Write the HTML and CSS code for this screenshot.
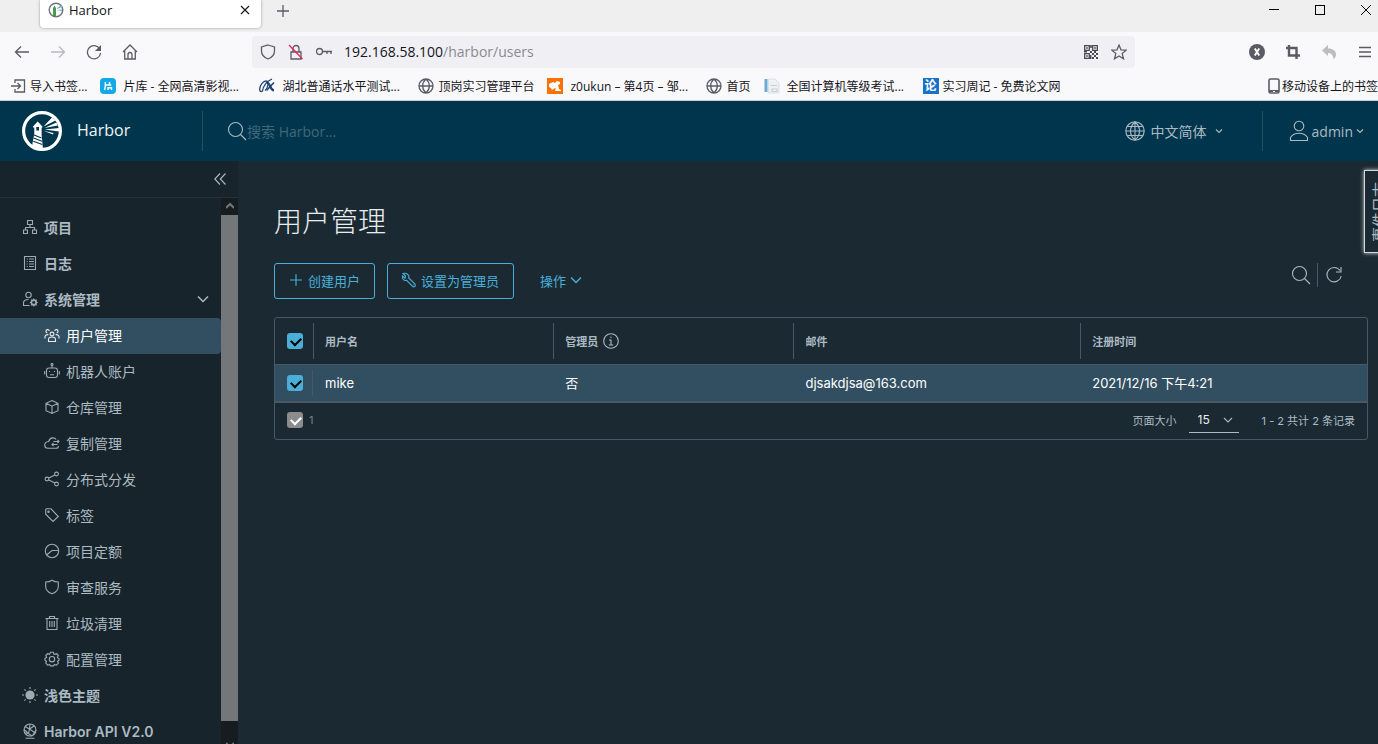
FILE: index.html
```html
<!DOCTYPE html>
<html lang="zh-CN">
<head>
    <meta charset="UTF-8">
    <meta name="viewport" content="width=device-width, initial-scale=1.0">
    <title>Harbor</title>
    <link rel="stylesheet" href="styles.css">
</head>
<body>
    <!-- 浏览器外框 -->
    <div class="browser">
        <div class="tabs">
            <div class="tab">
                <svg class="i16" viewBox="0 0 16 16"><circle cx="8" cy="8" r="6.800" fill="#fff" stroke="#6b7378" stroke-width="1.400"/><path d="M5 14V6l1.500-2.500L8 6v8z" fill="#4f9a4a"/><path d="M9 6l5-3v2L9 7zM9 8l5-.5v1.500z" fill="#6da7d2"/></svg>
                <span class="tab-title">Harbor</span>
                <button class="plain" aria-label="关闭标签页"><svg class="i16" viewBox="0 0 16 16"><path d="M4 4l8 8M12 4l-8 8" stroke="#15141a" stroke-width="1.100"/></svg></button>
            </div>
            <button class="plain new-tab" aria-label="新标签页"><svg class="i16" viewBox="0 0 16 16"><path d="M8 2v12M2 8h12" stroke="#5b5b66" stroke-width="1.300"/></svg></button>
            <div class="win">
                <button class="plain" aria-label="最小化"><svg class="i12" viewBox="0 0 12 12"><path d="M1 5.500h10" stroke="#000"/></svg></button>
                <button class="plain" aria-label="最大化"><svg class="i12" viewBox="0 0 12 12"><rect x="1.500" y="1.500" width="9" height="9" fill="none" stroke="#000"/></svg></button>
                <button class="plain" aria-label="关闭"><svg class="i12" viewBox="0 0 12 12"><path d="M1 1l10 10M11 1L1 11" stroke="#000"/></svg></button>
            </div>
        </div>

        <div class="toolbar">
            <div class="nav-btns">
                <button class="plain" aria-label="后退"><svg class="i16" viewBox="0 0 16 16"><path d="M15 8H1.500M7 2.500L1.500 8 7 13.500" class="ff"/></svg></button>
                <button class="plain off" aria-label="前进"><svg class="i16" viewBox="0 0 16 16"><path d="M1 8h13.500M9 2.500L14.500 8 9 13.500" class="ff"/></svg></button>
                <button class="plain" aria-label="刷新"><svg class="i16" viewBox="0 0 16 16"><path d="M13.800 5A6.600 6.600 0 1 0 14.600 9" class="ff"/><path d="M15 1v6H9z" fill="#5b5b66"/></svg></button>
                <button class="plain" aria-label="主页"><svg class="i16" viewBox="0 0 16 16"><path d="M1 8l7-7 7 7M2.700 6.500V15h10.600V6.500M6 15v-4.500a2 2 0 0 1 4 0V15" class="ff"/></svg></button>
            </div>
            <div class="urlbar">
                <svg class="i16" viewBox="0 0 16 16"><path d="M8 1l6.500 2v4c0 4-2.500 6.500-6.500 8C4 13.500 1.500 11 1.500 7V3z" class="ff"/></svg>
                <svg class="i16" viewBox="0 0 16 16"><path d="M3 8h10v7H3zM5 8V4.500a3 3 0 0 1 6 0V8" class="ff"/><path d="M1 1l13.500 14" stroke="#e22850" stroke-width="1.300"/></svg>
                <svg class="i16" viewBox="0 0 16 16"><circle cx="3.500" cy="7.500" r="3" class="ff"/><path d="M6.500 7.500H16M11 7.500V10M15 7.500V10" class="ff"/></svg>
                <div class="url" role="textbox" aria-label="地址栏" contenteditable="true" spellcheck="false">192.168.58.100<span>/harbor/users</span></div>
                <button class="plain" aria-label="二维码"><svg class="i16" viewBox="0 0 16 16"><path d="M1.700 1.700h4.600v4.600H1.700zM9.700 1.700h4.600v4.600H9.700zM1.700 9.700h4.600v4.600H1.700z" fill="none" stroke="#4a4a55" stroke-width="1.300"/><path d="M3.200 3.200h1.600v1.600H3.200zM11.200 3.200h1.600v1.600h-1.600zM3.200 11.200h1.600v1.600H3.200zM7.200 1h1.600v3H7.200zM7 7h2v2H7zM1 7h3v1.500H1zM9 9h2v2H9zM11 7h2v2h-2zM13 9h2v2h-2zM11 11h2v2h-2zM9 13h2v2H9zM13 13h2v2h-2zM7 11h1.500v4H7z" fill="#4a4a55"/></svg></button>
                <button class="plain" aria-label="收藏"><svg class="i16" viewBox="0 0 16 16"><path d="M8 1l2 4.800 5.200.4-4 3.400 1.300 5.200L8 12l-4.500 2.800 1.300-5.200-4-3.400 5.200-.4z" class="ff"/></svg></button>
            </div>
            <div class="ext">
                <button class="plain" aria-label="扩展"><svg class="i16" viewBox="0 0 16 16"><circle cx="8" cy="8" r="8" fill="#5b5b66"/><path d="M5.800 4.500l4.400 7M10.200 4.500l-4.400 7" stroke="#fff" stroke-width="1.900"/></svg></button>
                <button class="plain" aria-label="截图"><svg class="i16" viewBox="0 0 16 16"><path d="M4 1v10.500h11M1 4h10.500v11" fill="none" stroke="#5b5b66" stroke-width="2.400"/></svg></button>
                <button class="plain" aria-label="撤销"><svg class="i16" viewBox="0 0 16 16"><path d="M1 6.500L7 1v3.500c5 0 8 2.500 8 6 0 2-1 3.500-2.500 4.500-.5-4-2-6-5.500-6V12z" fill="#bbbbc0"/></svg></button>
                <button class="plain" aria-label="菜单"><svg class="i16" viewBox="0 0 16 16"><path d="M2 3.500h12M2 8h12M2 12.500h12" class="ff"/></svg></button>
            </div>
        </div>

        <nav class="bookmarks">
            <a href="#"><svg class="i16" viewBox="0 0 16 16"><path d="M5 5V2h9.500v12H5v-3M1 8h9M7.500 5l3 3-3 3" class="ff"/></svg>导入书签...</a>
            <a href="#" class="wide"><svg class="i16" viewBox="0 0 16 16"><rect width="16" height="16" rx="4" fill="#12a9e6"/><path d="M5.300 4v4.500L4.500 12M5.300 7h6M9.500 4v3M8 12V9.700h3.500V12" fill="none" stroke="#fff" stroke-width="1.400"/></svg>片库 - 全网高清影视...</a>
            <a href="#" class="wide"><svg class="i16" viewBox="0 0 16 16"><path d="M13 1C8 3 4 8 3.500 13c-2 1.500-3 0-2.800-2C1 6.500 4.500 3 7 3c3 0 2.500 7-1 9.500" fill="none" stroke="#1e4274" stroke-width="1.300"/><path d="M8 4.500c3 0 3 7.500 7 8" fill="none" stroke="#1e4274" stroke-width="2.200"/><path d="M15 4.500L7.500 12.500" stroke="#1e4274" stroke-width="1.500"/></svg>湖北普通话水平测试...</a>
            <a href="#"><svg class="i16" viewBox="0 0 16 16"><path d="M8 1a7 7 0 1 0 0 14A7 7 0 0 0 8 1zM8 1c-4.500 4-4.500 10 0 14M8 1c4.500 4 4.500 10 0 14M1 8h14" class="ff"/></svg>顶岗实习管理平台</a>
            <a href="#" class="wide"><svg class="i16" viewBox="0 0 16 16"><path d="M0 0h16v16H0z" fill="#fb7108"/><path d="M2 6l4-2 2 1 2-2 3 1v2l-2 1 1 4 2 1v1H8v-1l1-1-1-1-3 2-1-2-2-1z" fill="#fff"/></svg>z0ukun – 第4页 – 邹...</a>
            <a href="#"><svg class="i16" viewBox="0 0 16 16"><path d="M8 1a7 7 0 1 0 0 14A7 7 0 0 0 8 1zM8 1c-4.500 4-4.500 10 0 14M8 1c4.500 4 4.500 10 0 14M1 8h14" class="ff"/></svg>首页</a>
            <a href="#" class="wide"><svg class="i16" viewBox="0 0 16 16"><path d="M.5 1h3v13h-3z" fill="#6aaad8"/><path d="M4.500 1H11l4 4v10H4.500z" fill="#eef1f3" stroke="#dbdfe3"/><path d="M6.500 7.500H13M8 11h5v2.500H8z" fill="none" stroke="#c9d0d5" stroke-width="1.200"/></svg>全国计算机等级考试...</a>
            <a href="#"><b class="lun">论</b>实习周记 - 免费论文网</a>
            <a href="#" class="mobile"><svg class="phone" viewBox="0 0 12 16"><rect x="1" y="1" width="10" height="14" rx="1.500" fill="none" stroke="#5b5b66" stroke-width="1.600"/><path d="M1 13h10" stroke="#5b5b66" stroke-width="2"/><path d="M5 13.500h2" stroke="#fff"/></svg>移动设备上的书签</a>
        </nav>
    </div>

    <!-- 顶部导航 -->
    <header class="header">
        <a href="#" class="brand">
            <svg class="logo" viewBox="0 0 40 40">
                <circle cx="20" cy="20" r="18.400" fill="none" stroke="#fff" stroke-width="3.200"/>
                <path d="M11 15.500l4.700-5 4.700 5v1h-.8V23h-7.300v-6.500H11z" fill="#fff"/>
                <path d="M14.300 16h2.700v3.500h-2.700z" fill="#00364d"/>
                <path d="M12.300 22.500h7.200l1.500 16c-4 .5-8-.8-11-3.300z" fill="#fff"/>
                <path d="M12 24l7.500 3M11.500 27l8.500 3.200M11.300 30.200l9 3.200" stroke="#00364d" stroke-width="1.100"/>
                <path d="M21.500 15.500L30 6.500l3.500 3zM22.500 17l11.800-5.500 1.500 3zM22.500 18.500l14.500-1.500v3.500zM21.500 19.800l10 2.200-.5 1.500z" fill="#fff"/>
            </svg>
            <span>Harbor</span>
        </a>
        <label class="search">
            <svg class="i20" viewBox="0 0 20 20"><circle cx="8.500" cy="8.500" r="7" class="ln"/><path d="M13.500 13.500l5.500 5.500" class="ln"/></svg>
            <input type="text" aria-label="搜索 Harbor" placeholder="搜索 Harbor...">
        </label>
        <button class="plain lang">
            <svg class="i20" viewBox="0 0 20 20"><circle cx="10" cy="10" r="9.200" class="ln"/><path d="M10 1C4 6 4 14 10 19M10 1c6 5 6 13 0 18M10 1v18M1 10h18M2.500 5.500h15M2.500 14.500h15" class="ln"/></svg>
            中文简体
            <svg class="i8" viewBox="0 0 8 8"><path d="M1 2.500l3 3 3-3" class="ln"/></svg>
        </button>
        <button class="plain user">
            <svg class="person" viewBox="0 0 20 22"><circle cx="10" cy="6" r="4.800" class="ln"/><path d="M1.500 20.500v-3c2-3 5-4.200 8.500-4.200s6.500 1.200 8.500 4.200v3z" class="ln"/></svg>
            admin
            <svg class="i8" viewBox="0 0 8 8"><path d="M1 2.500l3 3 3-3" class="ln"/></svg>
        </button>
    </header>

    <div class="wrap">
        <!-- 侧边栏 -->
        <aside class="side">
            <button class="plain fold" aria-label="收起"><svg class="i12" viewBox="0 0 12 12"><path d="M6 .5L.8 6 6 11.500M11.500.5L6.300 6l5.200 5.500" class="ln"/></svg></button>
            <div class="side-body">
                <nav class="menu">
                    <a href="#" class="top"><svg class="i16" viewBox="0 0 16 16"><path d="M5.500 1.500h5v4h-5zM1.500 11h4v3.500h-4zM10.500 11h4v3.500h-4zM8 5.500v2.800M3.500 11V8.500h9V11" class="ln"/></svg>项目</a>
                    <a href="#" class="top"><svg class="i16" viewBox="0 0 16 16"><path d="M2.500 1.500h11v13h-11zM4.700 4h1M7 4h5M4.700 6.500h1M7 6.500h5M4.700 9h1M7 9h5M4.700 11.500h1M7 11.500h5" class="ln"/></svg>日志</a>
                    <a href="#" class="top"><svg class="i16" viewBox="0 0 16 16"><circle cx="6.500" cy="4" r="2.700" class="ln"/><path d="M7.500 14.500H1.500V12c0-2 2-3.500 5-3.500" class="ln"/><circle cx="11.800" cy="11.500" r="2.300" fill="none" stroke="currentColor" stroke-width="1.800"/><path d="M11.800 7.500v8M7.800 11.500h1.500M14.300 11.500h1.500M9 8.700l1 1M13.600 13.300l1 1M14.600 8.700l-1 1M10 13.300l-1 1" class="ln"/><circle cx="11.800" cy="11.500" r="1.300" fill="#17242b"/></svg>系统管理<svg class="i12 caret" viewBox="0 0 12 12"><path d="M1 3.500l5 5 5-5" fill="none" stroke="currentColor" stroke-width="1.500"/></svg></a>
                    <a href="#" class="sub on"><svg class="i16" viewBox="0 0 16 16"><circle cx="8" cy="7" r="1.900" class="ln"/><path d="M4.500 14.500v-2c0-1.500 1.300-2.500 3.500-2.500s3.500 1 3.500 2.500v2zM5.300 4a1.700 1.700 0 1 0-2 2M10.700 4a1.700 1.700 0 1 1 2 2M1 11.500V9.200c.5-1 2-1.700 3.500-1.500M15 11.500V9.200c-.5-1-2-1.700-3.500-1.500" class="ln"/></svg>用户管理</a>
                    <a href="#" class="sub"><svg class="i16" viewBox="0 0 16 16"><rect x="2.500" y="5" width="11" height="9.500" rx="2.500" class="ln"/><path d="M8 5V2.500M.7 8v3.500M15.300 8v3.500M5.500 8v1M10.500 8v1M6 11.700h4" class="ln"/><circle cx="8" cy="1.500" r="1" class="ln"/></svg>机器人账户</a>
                    <a href="#" class="sub"><svg class="i16" viewBox="0 0 16 16"><path d="M8 1.500l6 2.800v7.400l-6 2.800-6-2.800V4.300zM2 4.300l6 2.900 6-2.900M8 7.200v7.300" class="ln"/></svg>仓库管理</a>
                    <a href="#" class="sub"><svg class="i16" viewBox="0 0 16 16"><path d="M12 4.500C11 2.500 6 1.500 4.700 6.500 2 6.800.7 8.500.7 10.300c0 2 1.500 3 3 3H12c1.500 0 2.500-1 2.500-2.300M9.500 6.500H15M13.500 5l1.500 1.500L13.500 8M13.500 9.500H8M9.500 8L8 9.500 9.500 11" class="ln"/></svg>复制管理</a>
                    <a href="#" class="sub"><svg class="i16" viewBox="0 0 16 16"><circle cx="3" cy="8" r="1.900" class="ln"/><circle cx="12.500" cy="3" r="1.900" class="ln"/><circle cx="12.500" cy="13" r="1.900" class="ln"/><path d="M4.800 7l6-3.100M4.800 9l6 3.100" class="ln"/></svg>分布式分发</a>
                    <a href="#" class="sub"><svg class="i16" viewBox="0 0 16 16"><path d="M1.700 2.500v4.700l7.300 7.300 5.300-5-7.300-7.700H2.500z" class="ln"/><circle cx="4.500" cy="4.700" r=".7" class="ln"/></svg>标签</a>
                    <a href="#" class="sub"><svg class="i16" viewBox="0 0 16 16"><circle cx="8" cy="8" r="6.700" class="ln"/><path d="M2.500 12L8 7.500h6.500" class="ln"/></svg>项目定额</a>
                    <a href="#" class="sub"><svg class="i16" viewBox="0 0 16 16"><path d="M8 1.200c2 1.300 4 1.800 6.300 1.800v4.500c0 3.500-2.300 5.800-6.300 7.300-4-1.500-6.300-3.800-6.300-7.300V3C4 3 6 2.500 8 1.200z" class="ln"/></svg>审查服务</a>
                    <a href="#" class="sub"><svg class="i16" viewBox="0 0 16 16"><path d="M1.500 3.500h13M5.500 3.500v-2h5v2M3 3.500v11h10v-11M5.700 6v6M8 6v6M10.300 6v6" class="ln"/></svg>垃圾清理</a>
                    <a href="#" class="sub"><svg class="i16" viewBox="0 0 16 16"><path d="M6.600 1.300h2.800l.4 1.800 1 .4 1.600-1 2 2-1 1.600.4 1 1.200.4v1.700l-1.400 1 .8 2-2 2-2-.8-.8 1.500H6.500l-.8-1.500-2 .8-2-2 .8-2L1 9.400V7.200l1.700-.7-.9-2 2-2 1.700 1z" class="ln" stroke-linejoin="round"/><circle cx="8" cy="8.200" r="2.700" class="ln"/></svg>配置管理</a>
                    <a href="#" class="top"><svg class="i16" viewBox="0 0 16 16"><circle cx="8" cy="8" r="4.600" fill="currentColor"/><path d="M8 0v2M8 14v2M0 8h2M14 8h2M2.400 2.400l1.300 1.300M12.300 12.300l1.300 1.300M13.600 2.400l-1.300 1.300M3.700 12.300l-1.300 1.300" class="ln"/></svg>浅色主题</a>
                    <a href="#" class="top"><svg class="i16" viewBox="0 0 16 16"><circle cx="8" cy="7" r="6" class="ln"/><path d="M3 3.500l4.500 2.500L12 3M7.500 6l-1 4.500L3 10M6.500 10.500L10 13M7.500 6l5 3.500L14 7M12.500 9.500L11 12M2 6.500l4.500 4M8 1l-.5 5M3.500 15.300h9" class="ln"/></svg>Harbor API V2.0</a>
                </nav>
                <div class="bar">
                    <svg class="i8 up" viewBox="0 0 8 8"><path d="M0 6l4-4 4 4" fill="none" stroke="#737679" stroke-width="2"/></svg>
                    <div class="thumb"></div>
                    <svg class="i8 down" viewBox="0 0 8 8"><path d="M0 2l4 4 4-4" fill="none" stroke="#737679" stroke-width="2"/></svg>
                </div>
            </div>
        </aside>

        <!-- 用户管理 -->
        <main class="main">
            <h1>用户管理</h1>
            <div class="actions">
                <button class="btn"><svg class="i16" viewBox="0 0 16 16"><path d="M8 2v12M2 8h12" class="ln"/></svg>创建用户</button>
                <button class="btn"><svg class="i16" viewBox="0 0 16 16"><path d="M2 1.500l2.500 2.500L4 6.200 1.500 4c-.8 3 1.700 5 4.200 4.300l6 6.200c2 1 3.300-.8 2.300-2.300L7.800 6C8.500 3 6 .5 2 1.500z" class="ln"/><path d="M12.500 12.500l.5.5" class="ln"/></svg>设置为管理员</button>
                <button class="plain more">操作<svg class="i12" viewBox="0 0 12 12"><path d="M1 3.500l5 5 5-5" fill="none" stroke="currentColor" stroke-width="1.400"/></svg></button>
                <div class="tools">
                    <button class="plain" aria-label="搜索"><svg class="i20" viewBox="0 0 20 20"><circle cx="8.500" cy="8.500" r="7" class="ln"/><path d="M13.500 13.500l5.500 5.500" class="ln"/></svg></button>
                    <button class="plain" aria-label="刷新"><svg class="i20" viewBox="0 0 20 20"><path d="M16 5.500a7.200 7.200 0 1 0 1.200 5.500M17 2v5h-5" class="ln"/></svg></button>
                </div>
            </div>

            <div class="grid">
                <table>
                    <thead>
                        <tr>
                            <th class="pick"><input type="checkbox" class="check" aria-label="全选" checked></th>
                            <th class="c1"><div>用户名</div></th>
                            <th class="c1"><div>管理员<svg class="i16" viewBox="0 0 16 16"><circle cx="8" cy="8" r="7.300" class="ln"/><path d="M6 7h2v5M5.800 12h4.400M7.200 4.300h1.400" class="ln"/></svg></div></th>
                            <th><div>邮件</div></th>
                            <th><div>注册时间</div></th>
                        </tr>
                    </thead>
                    <tbody>
                        <tr>
                            <td class="pick"><div><input type="checkbox" class="check" aria-label="选择 mike" checked></div></td>
                            <td>mike</td>
                            <td>否</td>
                            <td>djsakdjsa@163.com</td>
                            <td>2021/12/16 下午4:21</td>
                        </tr>
                    </tbody>
                </table>
                <div class="foot">
                    <label class="picked"><input type="checkbox" class="check" checked disabled>1</label>
                    <label for="size">页面大小</label>
                    <div class="size">
                        <select id="size"><option>15</option><option>25</option><option>50</option></select>
                        <svg class="i12" viewBox="0 0 12 12"><path d="M2 4l4 4 4-4" class="ln"/></svg>
                    </div>
                    <span>1 - 2 共计 2 条记录</span>
                </div>
            </div>
        </main>
        <button class="event-log">事件日志</button>
    </div>
</body>
</html>
```
FILE: styles.css
```css
:root{
    --text: #acbac3;
    --blue: #49afd9;
    --line: #495865;
    --dark: #1b2a32;
}
*{
    box-sizing: border-box;
}
body{
    margin: 0;
    height: 100vh;
    display: flex;
    flex-direction: column;
    overflow: hidden;
    background: var(--dark);
    color: var(--text);
    font-family: Inter, "Noto Sans CJK SC", sans-serif;
    font-size: 14px;
}
a{
    color: inherit;
    text-decoration: none;
}
svg{
    display: block;
    flex: none;
}
button,input,select{
    font-family: inherit;
    color: inherit;
}
.plain{
    display: flex;
    align-items: center;
    padding: 0;
    border: 0;
    background: none;
}

/* 图标 */
.i8{ width: 8px; height: 8px; }
.i12{ width: 12px; height: 12px; }
.i16{ width: 16px; height: 16px; }
.i20{ width: 20px; height: 20px; }
.ln{
    fill: none;
    stroke: currentColor;
    stroke-width: 1.1;
}
.ff{
    fill: none;
    stroke: #5b5b66;
    stroke-width: 1.3;
}
.off{ opacity: .4; }

/* 浏览器 */
.browser{
    flex: none;
    background: #f9f9fb;
    border-bottom: 1px solid #ccccd0;
    color: #15141a;
    font-family: "Open Sans", "Noto Sans CJK SC", sans-serif;
    font-size: 12px;
}
.tabs{
    display: flex;
    height: 32px;
    padding-left: 40px;
    background: #efefef;
}
.tab{
    display: flex;
    align-items: center;
    gap: 5px;
    width: 221px;
    height: 28px;
    padding: 0 8px 8px;
    border-radius: 0 0 4px 4px;
    background: #fff;
    box-shadow: 0 0 3px #999;
}
.tab-title{
    flex: 1;
    font-size: 13px;
}
.new-tab{
    height: 22px;
    margin-left: 14px;
}
.win{
    display: flex;
    gap: 34px;
    height: 20px;
    margin-left: auto;
    padding-right: 6px;
}
.toolbar{
    display: flex;
    align-items: center;
    height: 40px;
    padding-right: 5px;
}
.nav-btns{
    display: flex;
    gap: 20px;
    width: 252px;
    padding-left: 14px;
}
.urlbar{
    flex: 1;
    display: flex;
    align-items: center;
    gap: 12px;
    height: 32px;
    padding: 0 8px;
    border-radius: 4px;
    background: #f0f0f4;
}
.url{
    flex: 1;
    padding-bottom: 2px;
    font-size: 14px;
    outline: 0;
}
.url span{
    color: #8a8a90;
}
.ext{
    display: flex;
    gap: 20px;
    margin-left: 114px;
}
.bookmarks{
    display: flex;
    gap: 13px;
    height: 28px;
    padding-left: 10px;
    white-space: nowrap;
}
.bookmarks a{
    display: flex;
    align-items: center;
    gap: 4px;
}
.bookmarks .wide{
    gap: 7px;
    width: 146px;
}
.bookmarks .mobile{
    gap: 2px;
    margin-left: auto;
}
.phone{
    width: 12px;
    height: 16px;
}
.lun{
    width: 16px;
    height: 16px;
    line-height: 16px;
    text-align: center;
    background: #1673c8;
    color: #fff;
}

/* 顶部导航 */
.header{
    flex: none;
    display: flex;
    align-items: center;
    height: 60px;
    background: #00364d;
}
.brand{
    display: flex;
    align-items: center;
    gap: 15px;
    width: 203px;
    height: 40px;
    padding-left: 22px;
    border-right: 1px solid #234f63;
    color: #f2f5f7;
    font-family: "Open Sans", sans-serif;
    font-size: 16px;
}
.brand span{
    padding-bottom: 2px;
}
.logo{
    width: 40px;
    height: 40px;
}
.search{
    flex: 1;
    display: flex;
    align-items: center;
    padding-left: 24px;
}
.search input{
    width: 200px;
    padding: 0;
    border: 0;
    outline: 0;
    background: none;
    font-family: "Open Sans", "Noto Sans CJK SC", sans-serif;
    font-size: 14px;
}
.search input::placeholder{
    color: #42677a;
}
.lang,.user{
    height: 40px;
    font-size: 14px;
}
.lang{
    gap: 6px;
    padding-right: 39px;
    border-right: 1px solid #234f63;
}
.lang .i8{
    margin-left: 2px;
}
.user{
    gap: 3px;
    padding: 0 14px 0 26px;
    font-family: "Open Sans", sans-serif;
}
.person{
    width: 20px;
    height: 22px;
}

.wrap{
    flex: 1;
    display: flex;
    min-height: 0;
    position: relative;
    overflow: hidden;
}

/* 侧边栏 */
.side{
    flex: none;
    display: flex;
    flex-direction: column;
    width: 238px;
    background: #17242b;
}
.fold{
    flex: none;
    justify-content: flex-end;
    height: 37px;
    padding-right: 12px;
    border-bottom: 1px solid #22323b;
}
.side-body{
    flex: 1;
    display: flex;
    min-height: 0;
}
.menu{
    flex: 1;
    padding-top: 12px;
    overflow: hidden;
}
.menu a{
    display: flex;
    align-items: center;
    gap: 6px;
    height: 36px;
    padding: 0 12px 2px 0;
}
.menu .top{
    padding-left: 22px;
    font-weight: 600;
}
.menu .sub{
    padding-left: 44px;
}
.menu .on{
    border-radius: 0 4px 4px 0;
    background: #324f62;
    color: #fff;
}
.menu .i16{
    opacity: .9;
}
.caret{
    margin-left: auto;
}
.bar{
    display: flex;
    flex-direction: column;
    align-items: center;
    width: 17px;
    background: #171c21;
    overflow: hidden;
}
.up{
    margin: 4px 0 5px;
}
.thumb{
    flex: 1;
    width: 100%;
    background: #73777a;
}
.down{
    margin-top: 20px;
    margin-bottom: -5px;
}

/* 内容区 */
.main{
    flex: 1;
    min-width: 0;
    padding: 41px 10px 0 36px;
}
h1{
    margin: 0;
    color: #eaedf0;
    font-size: 28px;
    line-height: 40px;
    font-weight: 300;
}
.actions{
    display: flex;
    align-items: center;
    gap: 12px;
    height: 36px;
    margin: 21px 0 18px;
}
.btn{
    display: flex;
    align-items: center;
    gap: 4px;
    height: 36px;
    padding: 0 14px 2px 13px;
    border: 1px solid var(--blue);
    border-radius: 3px;
    background: none;
    color: var(--blue);
    font-size: 13px;
}
.more{
    gap: 4px;
    margin-left: 14px;
    padding-bottom: 2px;
    color: var(--blue);
    font-size: 13px;
}
.tools{
    display: flex;
    height: 24px;
    margin-left: auto;
    padding: 0 24px 0 0;
    align-self: flex-start;
}
.tools button:first-child{
    padding-right: 6px;
    border-right: 1px solid var(--line);
}
.tools button:last-child{
    padding-left: 6px;
}
.grid{
    border: 1px solid var(--line);
    border-radius: 3px;
}
table{
    width: 100%;
    table-layout: fixed;
    border-collapse: collapse;
}
th,td{
    padding: 0;
    text-align: left;
}
th{
    height: 46px;
    font-size: 11px;
    font-weight: 600;
}
.c1{
    width: 22%;
}
th div{
    display: flex;
    align-items: center;
    gap: 5px;
    height: 36px;
    padding-left: 11px;
    border-left: 1px solid var(--line);
}
td{
    height: 38px;
    padding-left: 12px;
    font-size: 13px;
    color: #fff;
}
tbody tr{
    border-top: 1px solid var(--line);
    border-bottom: 2px solid var(--line);
    background: #324f62;
}
.pick{
    width: 38px;
    padding-left: 12px;
}
td.pick div{
    display: flex;
    align-items: center;
    height: 26px;
    border-right: 1px solid var(--line);
}
.check{
    display: block;
    appearance: none;
    width: 16px;
    height: 16px;
    margin: 0;
    border-radius: 3px;
    background: var(--blue);
    color: #000;
}
.check::after{
    content: "";
    display: block;
    width: 9px;
    height: 5px;
    margin: 4px 0 0 4px;
    border-left: 2px solid currentColor;
    border-bottom: 2px solid currentColor;
    transform: rotate(-45deg);
}
/* 勾的大小 */
.check::before{
    content: "";
    display: table;
}
.check::after{
    width: 8px;
    height: 5px;
}
.check:disabled{
    background: #8c8c8c;
    color: #fff;
}
.foot{
    display: flex;
    align-items: center;
    height: 36px;
    padding: 0 12px 2px;
    font-size: 11px;
}
.picked{
    display: flex;
    align-items: center;
    gap: 6px;
    margin-right: auto;
    color: #74828b;
}
.size{
    display: flex;
    align-items: center;
    width: 50px;
    height: 26px;
    margin: 0 23px 0 12px;
    padding-right: 5px;
    border-bottom: 1px solid var(--text);
}
.size select{
    flex: 1;
    appearance: none;
    padding: 0 0 0 9px;
    border: 0;
    background: none;
    color: #eaedf0;
    font-size: 12px;
}
.event-log{
    position: absolute;
    top: 9px;
    right: -14px;
    width: 28px;
    height: 83px;
    padding: 0 0 0 4px;
    border: 1px solid #d4d8da;
    background: var(--dark);
    box-shadow: 0 0 4px #ddd;
    font-size: 15px;
    line-height: 20px;
    writing-mode: sideways-lr;
}
```
